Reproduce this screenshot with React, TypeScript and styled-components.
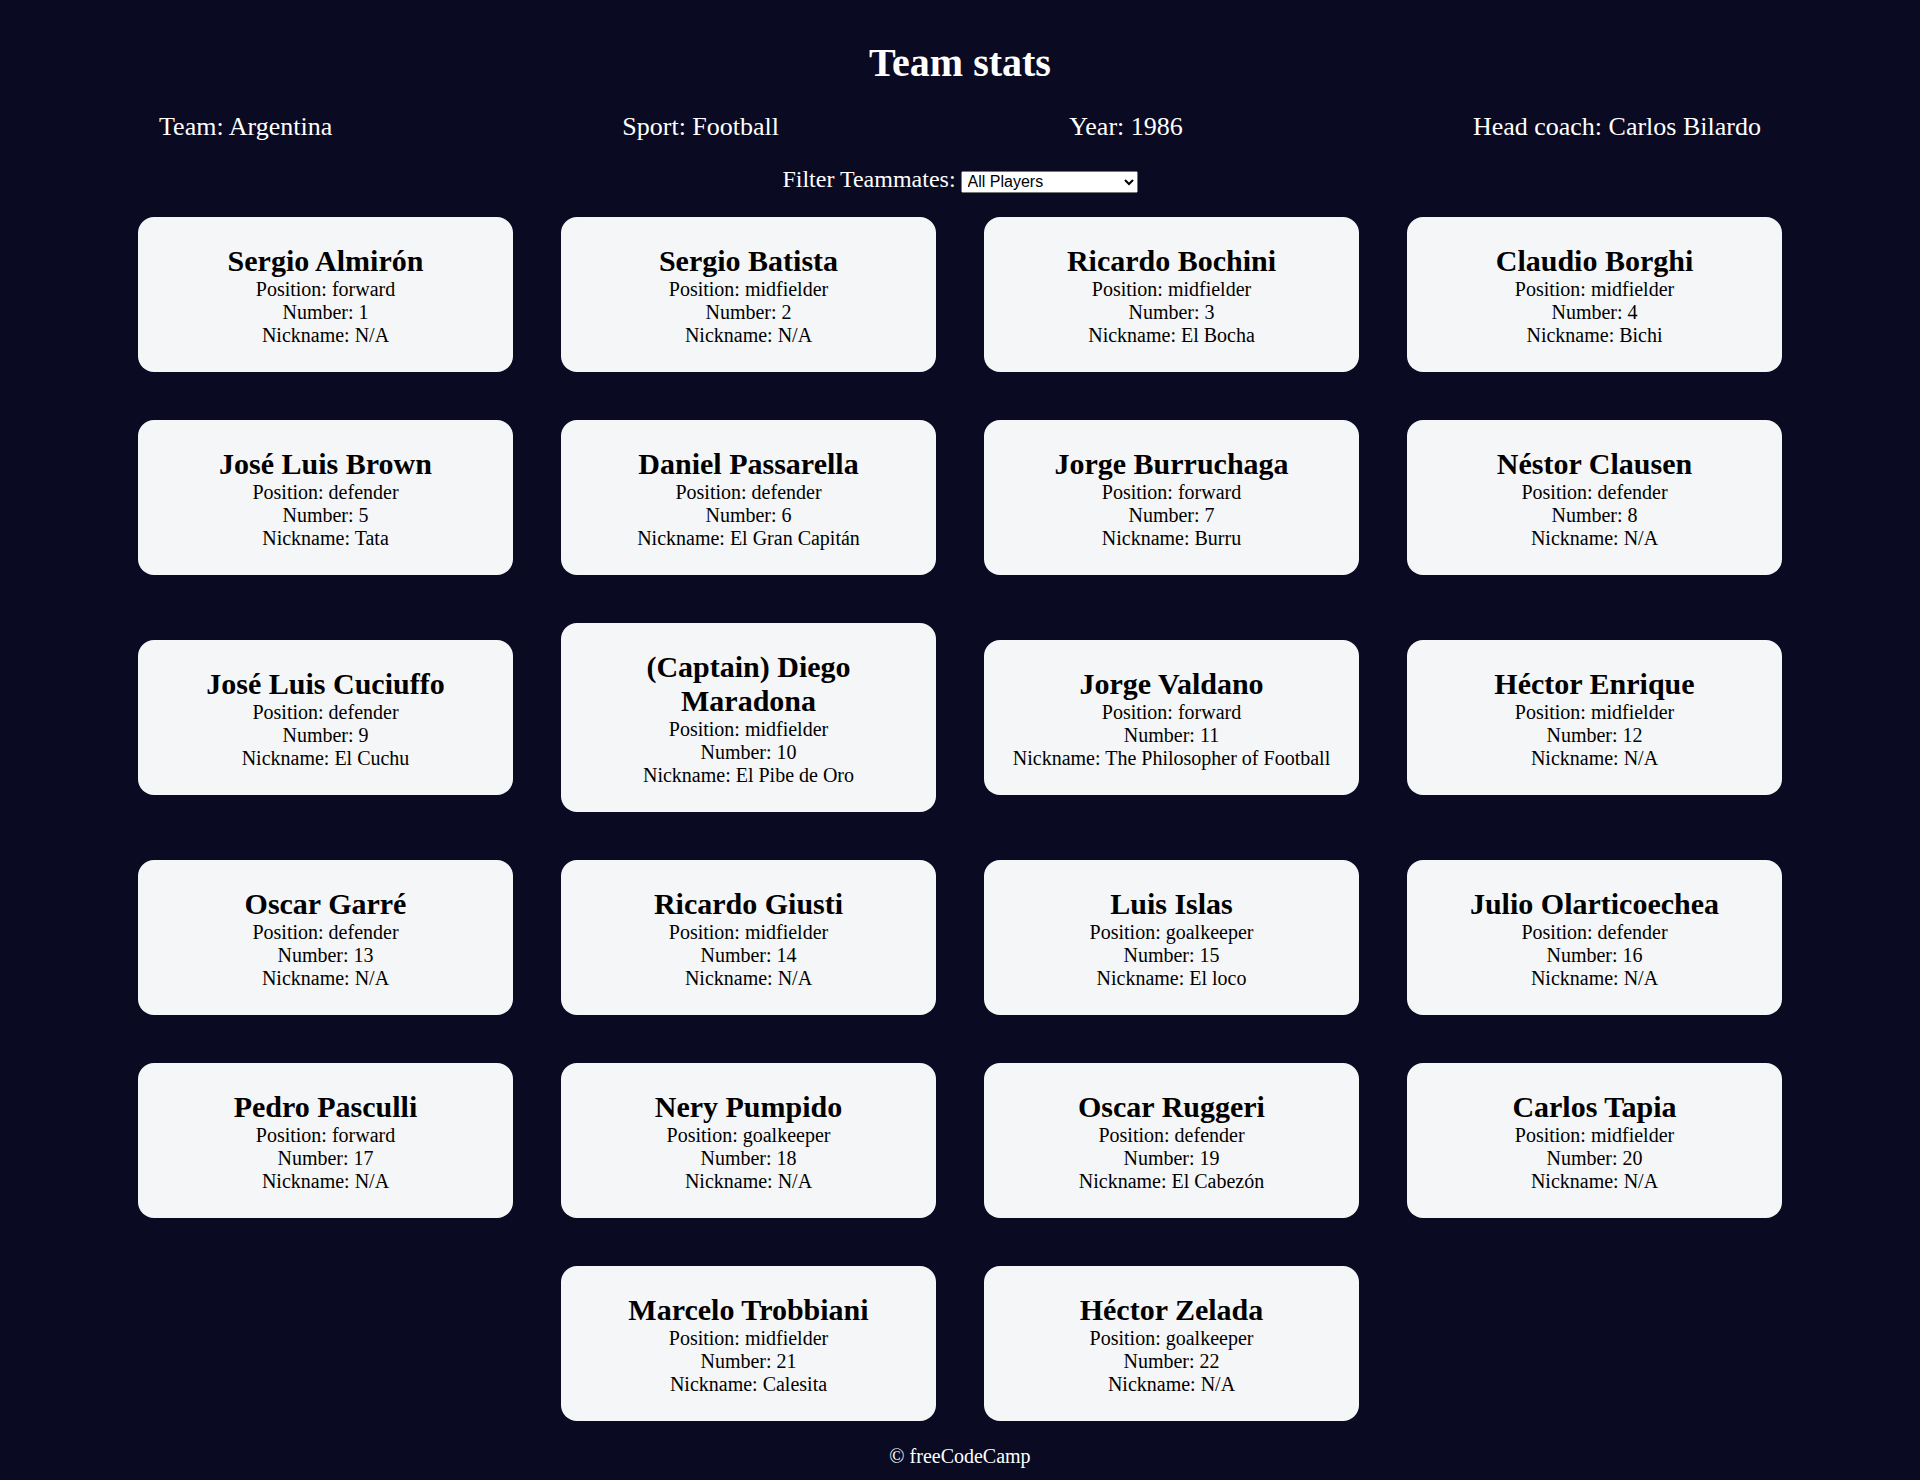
import React, { useState } from "react";
import styled, { createGlobalStyle } from "styled-components";

const GlobalStyle = createGlobalStyle`
  *, *::before, *::after { box-sizing: border-box; }
  html, body { margin: 0; padding: 0; }
  body {
    background-color: #0a0a23;
    font-family: "Liberation Serif", "Times New Roman", serif;
    font-size: 20px;
    text-align: center;
  }
`;

type Player = {
  name: string;
  position: string;
  number: number;
  isCaptain: boolean;
  nickname: string | null;
};

const players: Player[] = [
  { name: "Sergio Almirón", position: "forward", number: 1, isCaptain: false, nickname: null },
  { name: "Sergio Batista", position: "midfielder", number: 2, isCaptain: false, nickname: null },
  { name: "Ricardo Bochini", position: "midfielder", number: 3, isCaptain: false, nickname: "El Bocha" },
  { name: "Claudio Borghi", position: "midfielder", number: 4, isCaptain: false, nickname: "Bichi" },
  { name: "José Luis Brown", position: "defender", number: 5, isCaptain: false, nickname: "Tata" },
  { name: "Daniel Passarella", position: "defender", number: 6, isCaptain: false, nickname: "El Gran Capitán" },
  { name: "Jorge Burruchaga", position: "forward", number: 7, isCaptain: false, nickname: "Burru" },
  { name: "Néstor Clausen", position: "defender", number: 8, isCaptain: false, nickname: null },
  { name: "José Luis Cuciuffo", position: "defender", number: 9, isCaptain: false, nickname: "El Cuchu" },
  { name: "Diego Maradona", position: "midfielder", number: 10, isCaptain: true, nickname: "El Pibe de Oro" },
  { name: "Jorge Valdano", position: "forward", number: 11, isCaptain: false, nickname: "The Philosopher of Football" },
  { name: "Héctor Enrique", position: "midfielder", number: 12, isCaptain: false, nickname: null },
  { name: "Oscar Garré", position: "defender", number: 13, isCaptain: false, nickname: null },
  { name: "Ricardo Giusti", position: "midfielder", number: 14, isCaptain: false, nickname: null },
  { name: "Luis Islas", position: "goalkeeper", number: 15, isCaptain: false, nickname: "El loco" },
  { name: "Julio Olarticoechea", position: "defender", number: 16, isCaptain: false, nickname: null },
  { name: "Pedro Pasculli", position: "forward", number: 17, isCaptain: false, nickname: null },
  { name: "Nery Pumpido", position: "goalkeeper", number: 18, isCaptain: false, nickname: null },
  { name: "Oscar Ruggeri", position: "defender", number: 19, isCaptain: false, nickname: "El Cabezón" },
  { name: "Carlos Tapia", position: "midfielder", number: 20, isCaptain: false, nickname: null },
  { name: "Marcelo Trobbiani", position: "midfielder", number: 21, isCaptain: false, nickname: "Calesita" },
  { name: "Héctor Zelada", position: "goalkeeper", number: 22, isCaptain: false, nickname: null },
];

const Page = styled.div`
  padding: 39px 14px 12px;
  color: #ffffff;
`;

const Header = styled.header`
  margin: 0;
`;

const Title = styled.h1`
  margin: 0;
  font-size: 40px;
  font-weight: bold;
  color: #ffffff;
`;

const StatsRow = styled.div`
  display: flex;
  justify-content: space-around;
  flex-wrap: wrap;
  margin-top: 26px;
  font-size: 26px;
  color: #ffffff;
`;

const Stat = styled.p`
  margin: 0;
`;

const Options = styled.div`
  margin-top: 24px;
  line-height: 26px;
`;

const OptionsLabel = styled.label`
  color: #ffffff;
  font-size: 24px;
`;

const Select = styled.select`
  width: 177px;
  height: 22px;
  padding: 0 2px;
  font-family: "Liberation Sans", Arial, sans-serif;
  font-size: 16px;
  vertical-align: baseline;
`;

const Cards = styled.div`
  display: flex;
  justify-content: center;
  align-items: center;
  flex-wrap: wrap;
  margin: 0;
`;

const Card = styled.div`
  background-color: #f5f6f7;
  color: #000000;
  width: 375px;
  margin: 24px;
  padding: 27px 20px 25px;
  border-radius: 16px;
`;

const CardName = styled.h2`
  margin: 0;
  font-size: 30px;
  font-weight: bold;
`;

const CardLine = styled.p`
  margin: 0;
  font-size: 20px;
`;

const Footer = styled.footer`
  color: #ffffff;
  font-size: 20px;
`;

export default function App() {
  const [filter, setFilter] = useState("all");

  const visible = players.filter((p) => {
    if (filter === "all") return true;
    if (filter === "nickname") return p.nickname !== null;
    return p.position === filter;
  });

  return (
    <>
      <GlobalStyle />
      <Page>
        <Header>
          <Title>Team stats</Title>
          <StatsRow>
            <Stat>Team: Argentina</Stat>
            <Stat>Sport: Football</Stat>
            <Stat>Year: 1986</Stat>
            <Stat>Head coach: Carlos Bilardo</Stat>
          </StatsRow>
        </Header>
        <main>
          <Options>
            <OptionsLabel htmlFor="players">Filter Teammates:</OptionsLabel>{" "}
            <Select id="players" value={filter} onChange={(e) => setFilter(e.target.value)}>
              <option value="all">All Players</option>
              <option value="nickname">Nicknames</option>
              <option value="forward">Position Forward</option>
              <option value="midfielder">Position Midfielder</option>
              <option value="defender">Position Defender</option>
              <option value="goalkeeper">Position Goalkeeper</option>
            </Select>
          </Options>
          <Cards>
            {visible.map((p) => (
              <Card key={p.number}>
                <CardName>
                  {p.isCaptain ? "(Captain)" : ""} {p.name}
                </CardName>
                <CardLine>Position: {p.position}</CardLine>
                <CardLine>Number: {p.number}</CardLine>
                <CardLine>Nickname: {p.nickname !== null ? p.nickname : "N/A"}</CardLine>
              </Card>
            ))}
          </Cards>
        </main>
        <Footer>&copy; freeCodeCamp</Footer>
      </Page>
    </>
  );
}
